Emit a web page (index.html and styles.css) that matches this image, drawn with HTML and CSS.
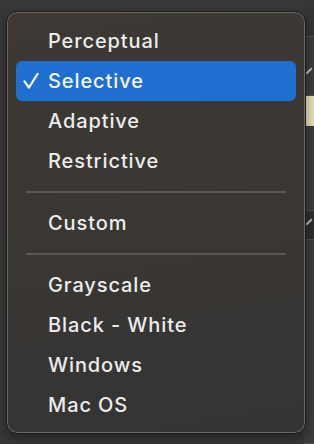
FILE: index.html
```html
<!DOCTYPE html>
<html>
  <head>
    <link rel="stylesheet" href="styles.css">
  </head>
  <body>
    <div class="backdrop">
      <div class="panel">
        <div class="row r1"></div>
        <div class="row r2"><span class="mark"></span></div>
        <div class="swatch"></div>
        <div class="row r3"></div>
        <div class="row r4 dark"><span class="mark"></span></div>
        <div class="row r5"></div>
      </div>
    </div>
    <div class="menu">
      <div class="item">Perceptual</div>
      <div class="item selected">
        <svg class="check" width="16" height="18" viewBox="0 0 16 18">
          <polyline points="1.5,9.5 6,15.5 14.5,2" fill="none" stroke="#f4f7fb" stroke-width="2.3" stroke-linecap="round" stroke-linejoin="round"/>
        </svg>
        Selective
      </div>
      <div class="item">Adaptive</div>
      <div class="item">Restrictive</div>
      <div class="sep"></div>
      <div class="item">Custom</div>
      <div class="sep"></div>
      <div class="item">Grayscale</div>
      <div class="item">Black - White</div>
      <div class="item">Windows</div>
      <div class="item">Mac OS</div>
    </div>
  </body>
</html>
```

FILE: styles.css
```css
html, body {
  margin: 0;
  height: 100%;
  background: #383838;
  font-family: Inter, "Open Sans", sans-serif;
  overflow: hidden;
}
.backdrop {
  display: flex;
  justify-content: flex-end;
  height: 100%;
}
.panel {
  width: 10px;
  background: #3c3c3c;
  display: flex;
  flex-direction: column;
}
.row {
  border-bottom: 1px solid #4e4e4e;
  position: relative;
}
.r1 { height: 36px; background: #353535; }
.r2 { height: 58px; }
.swatch { height: 30px; background: #e6dfb6; }
.r3 { height: 84px; }
.r4 { height: 28px; }
.r4.dark { background: #2e2e2e; }
.r5 { flex: 1; }
.mark {
  position: absolute;
  left: 1px;
  top: 10px;
  width: 8px;
  height: 2px;
  background: #bbb;
  transform: rotate(-45deg);
}
.r2 .mark { top: 33px; }
.menu {
  position: absolute;
  left: 6px;
  top: 11px;
  width: 300px;
  height: 423px;
  box-sizing: border-box;
  padding: 9px 9px;
  border-radius: 11px;
  border: 1px solid #1c1c1c;
  box-shadow: inset 0 0 0 1px #6a6865, 0 4px 12px rgba(0,0,0,0.4);
  background: linear-gradient(170deg, #3d3833 0%, #3a3733 45%, #353434 100%);
  display: flex;
  flex-direction: column;
}
.item {
  height: 40px;
  flex: none;
  display: flex;
  align-items: center;
  padding-left: 32px;
  color: #ececec;
  font-size: 20px;
  font-weight: 500;
  letter-spacing: 0.9px;
  border-radius: 6px;
  position: relative;
}
.item.selected {
  background: #1f6fd0;
  color: #f4f7fb;
}
.check {
  position: absolute;
  left: 7px;
  top: 11px;
}
.sep {
  flex: none;
  height: 22px;
  display: flex;
  align-items: center;
  margin: 0 10px;
}
.sep::after {
  content: "";
  flex: 1;
  height: 2px;
  background: #595653;
}
```
